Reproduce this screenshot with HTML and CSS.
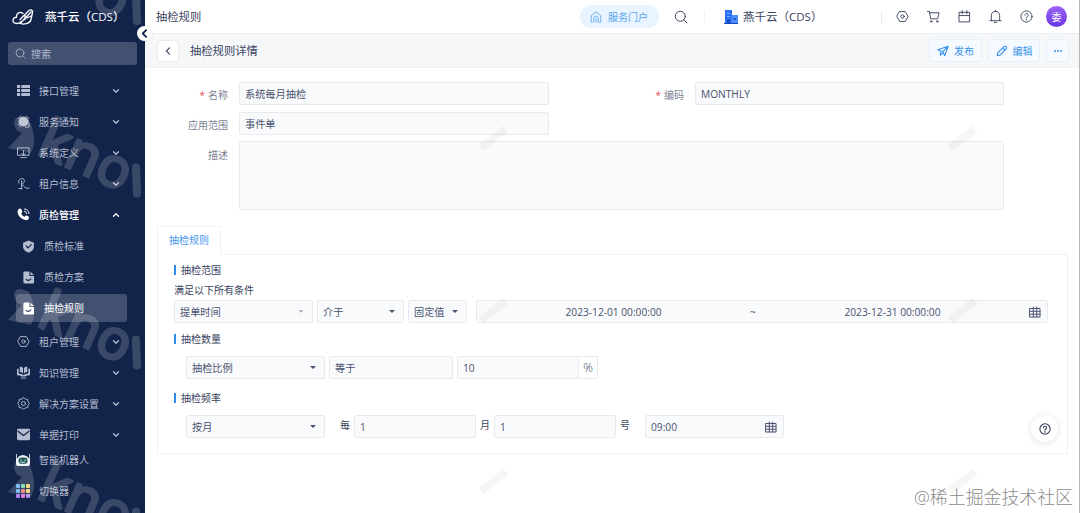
FILE: index.html
```html
<!DOCTYPE html>
<html lang="zh-CN">
<head>
    <meta charset="UTF-8">
    <meta name="viewport" content="width=device-width, initial-scale=1.0">
    <title>抽检规则</title>
    <link rel="stylesheet" href="styles.css">
</head>
<body>

    <!-- shared icons -->
    <svg class="defs" width="0" height="0">
        <symbol id="down" viewBox="0 0 8 8"><path d="M1.5 2.8 4 5.3l2.500-2.500"/></symbol>
        <symbol id="hex" viewBox="0 0 14 14"><path d="M4 1.700h6L13 7l-3 5.300H4L1 7z"/><circle cx="7" cy="7" r="1.800"/></symbol>
        <symbol id="search" viewBox="0 0 14 14"><circle cx="6.300" cy="6.300" r="5"/><path d="m10 10 3 3"/></symbol>
        <symbol id="help" viewBox="0 0 14 14"><circle cx="7" cy="7" r="6"/><path d="M5.200 5.600c0-2.600 3.700-2.300 3.700 0C8.900 7 7 6.900 7 8.300M7 9.700v1"/></symbol>
        <symbol id="doc" viewBox="0 0 14 14"><path class="solid" d="M3 .5h5v5h5V12q0 1.500-1.500 1.500H3q-1.500 0-1.500-1.500V2q0-1.500 1.500-1.500zM9.200.7l3.600 3.600H9.200z"/><path class="cut" d="M4.500 9q2.500 2.500 5-.5"/></symbol>
        <symbol id="grid-cal" viewBox="0 0 12 12"><path d="M1 2.500h10v8.500H1zM1 5.300h10M1 8.200h10M4.300 1v10M7.700 1v10"/></symbol>
    </svg>

    <div class="app">
        <aside class="sidebar">
            <svg class="sidebar-mark" width="145" height="513">
                <path class="mark-line" d="M136-5l1 26"/>
                <text transform="translate(90 6) rotate(24)">o</text>
                <g transform="translate(0 103)">
                    <path class="mark-fill" d="M14 20q0-7 8-6l7 3q6 12 5 25l-3 8-23-5 14-15q-7-2-8-10z"/>
                    <path class="mark-line" d="M136 64.500l1 26"/>
                    <text transform="translate(35 50) rotate(24)">kno</text>
                </g>
                <g transform="translate(0 275)">
                    <path class="mark-fill" d="M14 20q0-7 8-6l7 3q6 12 5 25l-3 8-23-5 14-15q-7-2-8-10z"/>
                    <path class="mark-line" d="M136 64.500l1 26"/>
                    <text transform="translate(35 50) rotate(24)">kno</text>
                </g>
                <g transform="translate(0 447)">
                    <path class="mark-fill" d="M14 20q0-7 8-6l7 3q6 12 5 25l-3 8-23-5 14-15q-7-2-8-10z"/>
                    <path class="mark-line" d="M136 64.500l1 26"/>
                    <text transform="translate(35 50) rotate(24)">kno</text>
                </g>
            </svg>

            <div class="brand">
                <svg class="logo" viewBox="0 0 22 16"><path d="M9 12.500c-1.500 2.500-7.500 3-8-.5C.7 9.500 2.800 8 4.500 8.300 4 4 8 2 11 4.500M8 10.500 16.500 2c2-2 4.500-1 4 1.500l-1.500 7c-1 4.500-8 5.500-11.500 3.500M8 14.500 19 3M13 6v4.500M20 6.500l-5 2.500"/></svg>
                <span>燕千云（CDS）</span>
            </div>
            <div class="menu-search">
                <svg class="icon" viewBox="0 0 14 14"><use href="#search"/></svg>
                <span>搜索</span>
            </div>

            <nav class="menu">
                <a class="menu-item">
                    <svg class="icon" viewBox="0 0 14 14"><path class="solid" d="M0 1h14v3.300H0zM0 5.400h14v3.200H0zM0 9.800h14V13H0z"/><path class="cut" d="M4 1v12"/></svg>
                    <span>接口管理</span>
                    <svg class="arrow"><use href="#down"/></svg>
                </a>
                <a class="menu-item">
                    <svg class="icon" viewBox="0 0 14 14"><circle class="solid" cx="7" cy="7" r="5.500"/><path d="M1 4l3-3M10 1l3 3M1 10l3 3M13 9v4H9"/></svg>
                    <span>服务通知</span>
                    <svg class="arrow"><use href="#down"/></svg>
                </a>
                <a class="menu-item">
                    <svg class="icon" viewBox="0 0 14 14"><path d="M1 2h12v8H1zM4 12.500h6M7 5v5M5 8l2 2 2-2"/></svg>
                    <span>系统定义</span>
                    <svg class="arrow"><use href="#down"/></svg>
                </a>
                <a class="menu-item">
                    <svg class="icon" viewBox="0 0 14 14"><path d="M2 6.500C-.2 2 7.500-.5 8 4c.1 1.500-.7 2.500-2 3M5 4v9M5 8c3 1 3 4 5 4h3M2 12.500h3"/></svg>
                    <span>租户信息</span>
                    <svg class="arrow"><use href="#down"/></svg>
                </a>
                <a class="menu-item open">
                    <svg class="icon" viewBox="0 0 14 14"><path class="solid" d="M1.500 1.500Q3.500-.5 5 2l.8 2Q5.500 5 4.500 5.800q1 2.500 3.600 3.600l1.400-1.300q3.500.5 3.500 2.400-.5 3.300-4 2.500Q1.500 11 .7 4.500.5 2.500 1.500 1.500z"/><path d="M8 1q4.500.5 5 5M8 3.500q2.300.3 2.500 2.500"/></svg>
                    <span>质检管理</span>
                    <svg class="arrow up"><use href="#down"/></svg>
                </a>
                <div class="submenu">
                    <a class="sub-item">
                        <svg class="icon" viewBox="0 0 14 14"><path class="solid" d="M7 .5 12.800 3v5q-1 4-5.800 5.700Q2.200 12 1.200 8V3z"/><path class="cut" d="m4.500 6.500 2 2 3.500-3.500"/></svg>
                        <span>质检标准</span>
                    </a>
                    <a class="sub-item">
                        <svg class="icon" viewBox="0 0 14 14"><use href="#doc"/></svg>
                        <span>质检方案</span>
                    </a>
                    <a class="sub-item active">
                        <svg class="icon" viewBox="0 0 14 14"><use href="#doc"/></svg>
                        <span>抽检规则</span>
                    </a>
                </div>
                <a class="menu-item">
                    <svg class="icon" viewBox="0 0 14 14"><use href="#hex"/></svg>
                    <span>租户管理</span>
                    <svg class="arrow"><use href="#down"/></svg>
                </a>
                <a class="menu-item">
                    <svg class="icon" viewBox="0 0 14 14"><path class="solid" d="M3 .5q3 0 3.500 2V8Q5 6.500 3 6.500zM11 .5q-3 0-3.500 2V8Q9 6.500 11 6.500zM0 3h1.800v5Q5 8 7 9.700 9 8 12.200 8V3H14v7q-3.500 0-5 1.300H5Q3.500 10 0 10z"/><path d="M4.500 13h5"/></svg>
                    <span>知识管理</span>
                    <svg class="arrow"><use href="#down"/></svg>
                </a>
                <a class="menu-item">
                    <svg class="icon" viewBox="0 0 14 14"><path d="M7 .8 9 2.300l2.500.2.300 2.500L13.300 7l-1.500 2-.3 2.500-2.500.200-2 1.500-2-1.500-2.500-.2L2.200 9 .7 7l1.500-2 .3-2.500L5 2.300z"/><circle cx="7" cy="7" r="2.200"/></svg>
                    <span>解决方案设置</span>
                    <svg class="arrow"><use href="#down"/></svg>
                </a>
                <a class="menu-item">
                    <svg class="icon" viewBox="0 0 14 14"><rect class="solid" x="0" y=".8" width="14" height="12.400" rx="1.500"/><path class="cut" d="m1 3.500 6 4.500 6-4.500"/></svg>
                    <span>单据打印</span>
                    <svg class="arrow"><use href="#down"/></svg>
                </a>
            </nav>

            <div class="tools">
                <a class="tool">
                    <svg class="tool-icon" viewBox="0 0 14 14"><path fill="#eef5f7" d="M0 1h.8v5l2-2.500q4-3 8.400 0l2 2.500V1h.8v10q0 2-2 2H2q-2 0-2-2z"/><rect x="2.500" y="4.500" width="9" height="6.500" rx="3" fill="#27545b"/><path d="M5 6.800v1M9 6.800v1M5.500 9.300q1.500 1 3 0" fill="none" stroke="#9be5c8"/></svg>
                    <span>智能机器人</span>
                </a>
                <a class="tool">
                    <svg class="tool-icon" viewBox="0 0 14 14">
                        <g fill="#64b5f6"><rect width="4" height="4" rx="1"/><rect y="5" width="4" height="4" rx="1"/></g>
                        <g fill="#74d99b"><rect x="5" width="4" height="4" rx="1"/></g>
                        <g fill="#f3d36b"><rect x="10" width="4" height="4" rx="1"/><rect x="10" y="5" width="4" height="4" rx="1"/></g>
                        <g fill="#f2777a"><rect x="5" y="5" width="4" height="4" rx="1"/></g>
                        <g fill="#b184ef"><rect y="10" width="4" height="4" rx="1"/><rect x="10" y="10" width="4" height="4" rx="1"/></g>
                        <g fill="#e17be0"><rect x="5" y="10" width="4" height="4" rx="1"/></g>
                    </svg>
                    <span>切换器</span>
                </a>
            </div>
            <button class="collapse"><svg viewBox="0 0 8 8"><use href="#down"/></svg></button>
        </aside>

        <main class="main">
            <header class="topbar">
                <span class="page-name">抽检规则</span>
                <a class="portal">
                    <svg class="icon" viewBox="0 0 14 14"><path d="M2.500 13h-1V5.500L7 1l5.500 4.500V13h-1.700M4.500 13V8q0-2 2.500-2t2.500 2v5M7 9v4"/></svg>
                    <span>服务门户</span>
                </a>
                <svg class="icon top-search" viewBox="0 0 14 14"><use href="#search"/></svg>
                <div class="tenant">
                    <svg class="building" viewBox="0 0 14 14"><path fill="#2b6ff2" d="M1 0h7v13H1z"/><path fill="#4a8dfb" d="M7.500 5H14v8H7.500z"/><path fill="#1749b8" d="M0 13h14v1H0zM3 9.500h3V13H3zM9.800 8h1.700v2H9.800z"/><path stroke="#7fb0ff" d="M3.500 3.500h2M3.500 6.500h2"/></svg>
                    <span>燕千云（CDS）</span>
                </div>
                <div class="actions">
                    <svg class="icon" viewBox="0 0 14 14"><use href="#hex"/></svg>
                    <svg class="icon" viewBox="0 0 14 14"><path d="M.5 1.500h2l1.500 8h7.500l1.500-6.500H3"/><circle cx="4.500" cy="12.300" r=".8"/><circle cx="11" cy="12.300" r=".8"/></svg>
                    <svg class="icon" viewBox="0 0 14 14"><path d="M1.500 2.500h11v10.300h-11zM1.500 6h11M4.500.7v3.500M9.500.7v3.500"/></svg>
                    <svg class="icon" viewBox="0 0 14 14"><path d="M1 11.500h12M2.500 11.500V6q.5-4.500 4.500-4.500T11.500 6v5.500M5.700 13.300h2.600M7 .4v1"/></svg>
                    <svg class="icon" viewBox="0 0 14 14"><use href="#help"/></svg>
                    <span class="avatar">委</span>
                </div>
            </header>

            <div class="subbar">
                <button class="back"><svg viewBox="0 0 8 8"><use href="#down"/></svg></button>
                <h1>抽检规则详情</h1>
                <div class="buttons">
                    <button class="btn btn-publish">
                        <svg class="icon" viewBox="0 0 14 14"><path d="M1 5.500 13 1.500 9 12.500 6.500 8zM6.500 8 13 1.500M4 8.500V12l2.500-2.500"/></svg>发布
                    </button>
                    <button class="btn btn-edit">
                        <svg class="icon" viewBox="0 0 14 14"><path d="m1.500 12.500.7-3.500 7-7q1.200-1 2.500 0 1.300 1.300.2 2.600l-7 7zM8 3.500 10.500 6"/></svg>编辑
                    </button>
                    <button class="btn btn-more"><i></i><i></i><i></i></button>
                </div>
            </div>

            <div class="form">
                <label class="required">名称</label>
                <div class="field">系统每月抽检</div>
                <label class="required">编码</label>
                <div class="field">MONTHLY</div>
                <label>应用范围</label>
                <div class="field">事件单</div>
                <label class="desc-label">描述</label>
                <div class="field textarea"></div>
            </div>

            <div class="tabs"><span class="tab">抽检规则</span></div>
            <section class="panel">
                <h2>抽检范围</h2>
                <p class="tip">满足以下所有条件</p>
                <div class="row row-range">
                    <div class="field select w-139 muted">提单时间</div>
                    <div class="field select w-87">介于</div>
                    <div class="field select w-59">固定值</div>
                    <div class="field range">
                        <span>2023-12-01 00:00:00</span>
                        <b>~</b>
                        <span>2023-12-31 00:00:00</span>
                        <svg class="cal"><use href="#grid-cal"/></svg>
                    </div>
                </div>

                <h2>抽检数量</h2>
                <div class="row indent row-count">
                    <div class="field select w-139">抽检比例</div>
                    <div class="field w-124">等于</div>
                    <div class="number">
                        <div class="field w-122">10</div>
                        <div class="unit">%</div>
                    </div>
                </div>

                <h2>抽检频率</h2>
                <div class="row indent row-frequency">
                    <div class="field select w-139">按月</div>
                    <span class="word first">每</span>
                    <div class="field w-122">1</div>
                    <span class="word">月</span>
                    <div class="field w-122">1</div>
                    <span class="word last">号</span>
                    <div class="field w-139 time">09:00<svg class="cal"><use href="#grid-cal"/></svg></div>
                </div>
            </section>

            <svg class="main-mark" width="934" height="479">
                <path d="M336 114l25-19M336 286l25-19M336 457l25-19M805 114l25-19M805 286l25-19M805 457l25-19"/>
            </svg>
            <button class="float-help"><svg class="icon" viewBox="0 0 14 14"><use href="#help"/></svg></button>
            <span class="credit">@稀土掘金技术社区</span>
        </main>
    </div>

</body>
</html>
```

FILE: styles.css
```css
* {
    box-sizing: border-box;
}

body {
    margin: 0;
    background: #fff;
    color: #3a4360;
    font: 10px/14px "Open Sans", "Noto Sans CJK SC", sans-serif;
}

button {
    padding: 0;
    font: inherit;
}

svg {
    flex: none;
    fill: none;
    stroke: currentColor;
    stroke-linecap: round;
    stroke-linejoin: round;
}

.defs {
    position: absolute;
}

.solid {
    fill: currentColor;
    stroke: none;
}

.cut {
    stroke: #13244b;
    stroke-width: 1.3;
}

.icon {
    width: 13px;
    height: 13px;
}

.app {
    display: flex;
    width: 1080px;
    height: 513px;
    overflow: hidden;
}

/* sidebar */
.sidebar {
    position: relative;
    z-index: 1;
    display: flex;
    flex-direction: column;
    flex: none;
    width: 145px;
    background: #13244b;
    color: #b4bdcf;
}

.sidebar-mark {
    position: absolute;
    top: 0;
    left: 0;
    z-index: 1;
    opacity: 0.17;
    pointer-events: none;
}

.sidebar-mark text {
    fill: #fff;
    stroke: #fff;
    stroke-width: 3;
    font: 400 55px "Open Sans", sans-serif;
}

.mark-fill {
    fill: #fff;
    stroke: none;
}

.mark-line {
    stroke: #fff;
    stroke-width: 8;
}

.brand {
    display: flex;
    align-items: center;
    gap: 11px;
    height: 34px;
    padding-left: 12px;
    color: #fff;
    font-size: 11.5px;
    font-weight: 500;
    white-space: nowrap;
}

.logo {
    width: 22px;
    height: 16px;
    stroke-width: 1.3;
}

.menu-search {
    display: flex;
    align-items: center;
    gap: 5px;
    height: 23px;
    margin: 8px 8px 0;
    padding-left: 7px;
    border-radius: 3px;
    background: #435170;
}

.menu-search .icon {
    width: 11px;
    height: 11px;
}

.menu {
    padding-top: 10px;
}

.menu-item {
    display: flex;
    align-items: center;
    height: 31px;
    padding: 0 25px 0 17px;
}

.menu-item span {
    flex: 1;
    margin-left: 9px;
}

.menu-item.open {
    color: #fff;
    font-weight: 500;
}

.arrow {
    width: 8px;
    height: 8px;
    stroke-width: 1.3;
}

.arrow.up {
    transform: rotate(180deg);
}

.submenu {
    padding: 2px 18px 1px 16px;
}

.sub-item {
    display: flex;
    align-items: center;
    gap: 9px;
    height: 28px;
    margin: 0 0 3px;
    padding-left: 6px;
    border-radius: 3px;
}

.sub-item.active {
    background: #425170;
    color: #fff;
}

.tool {
    display: flex;
    align-items: center;
    gap: 9px;
    height: 20px;
    padding-left: 16px;
}

.tool + .tool {
    margin-top: 11px;
}

.tool-icon {
    width: 14px;
    height: 14px;
    stroke: none;
}

.collapse {
    position: absolute;
    top: 26px;
    right: -7px;
    z-index: 2;
    display: grid;
    place-items: center;
    width: 15px;
    height: 15px;
    border: 0;
    border-radius: 50%;
    background: #fff;
    box-shadow: 0 0 2px rgba(0, 0, 0, 0.15);
    color: #13244b;
}

.collapse svg {
    width: 11px;
    height: 11px;
    stroke-width: 1.3;
    transform: rotate(90deg);
}

/* top bars */
.main {
    position: relative;
    flex: 1;
    border-right: 1px solid #b5b7ba;
}

.topbar {
    display: flex;
    align-items: center;
    height: 34px;
    padding-left: 11px;
    border-bottom: 1px solid #eceef1;
}

.page-name {
    width: 424px;
    font-size: 11.3px;
}

.portal {
    display: flex;
    align-items: center;
    gap: 6px;
    width: 79px;
    height: 23px;
    padding-left: 10px;
    border-radius: 12px;
    background: #e8f4ff;
    color: #5aa5ee;
}

.portal .icon {
    width: 12px;
    height: 12px;
}

.top-search {
    margin-left: 15px;
    width: 14px;
    height: 14px;
}

.tenant {
    display: flex;
    align-items: center;
    gap: 5px;
    width: 178px;
    height: 12px;
    margin-left: 16px;
    padding-left: 19px;
    border-left: 1px solid #f0f1f4;
    border-right: 1px solid #e5e7eb;
    font-size: 11.5px;
}

.building {
    width: 14px;
    height: 14px;
    stroke: none;
}

.actions {
    display: flex;
    align-items: center;
    gap: 18px;
    margin-left: 14px;
}

.avatar {
    display: grid;
    place-items: center;
    width: 21px;
    height: 21px;
    margin-left: -5px;
    border-radius: 50%;
    background: linear-gradient(#9a63f3, #6a38ea);
    color: #fff;
}

.subbar {
    display: flex;
    align-items: center;
    height: 34px;
    padding: 0 10px 0 12px;
    border-bottom: 1px solid #f0f1f3;
    background: #f6f7f9;
}

.back {
    display: grid;
    place-items: center;
    width: 22px;
    height: 22px;
    border: 1px solid #e9ebef;
    border-radius: 3px;
    background: #fff;
    color: #4a526b;
}

.back svg {
    width: 10px;
    height: 10px;
    transform: rotate(90deg);
}

h1 {
    flex: 1;
    margin: 0 0 0 11px;
    font-size: 11.3px;
    font-weight: 400;
}

.buttons {
    display: flex;
    gap: 6px;
}

.btn {
    display: flex;
    align-items: center;
    justify-content: center;
    gap: 5px;
    height: 23px;
    border: 1px solid #e4eff8;
    border-radius: 3px;
    background: #f4faff;
    color: #3790e6;
}

.btn .icon {
    width: 12px;
    height: 12px;
    stroke-width: 1.3;
}

.btn-publish {
    width: 53px;
}

.btn-edit {
    width: 52px;
}

.btn-more {
    gap: 1px;
    width: 23px;
}

.btn-more i {
    width: 2px;
    height: 2px;
    border-radius: 50%;
    background: #3790e6;
}

/* form */
.form {
    display: grid;
    grid-template-columns: 94px 310px 146px 309px;
    grid-template-rows: 23px 23px 69px;
    row-gap: 7px;
    padding: 14px 0 0;
}

label {
    padding: 6px 11px 0 0;
    color: #7c8292;
    text-align: right;
    white-space: nowrap;
}

.required::before {
    content: "*";
    margin-right: 3px;
    color: #e34d59;
}

.desc-label {
    grid-column: 1;
}

.field {
    display: flex;
    align-items: center;
    height: 23px;
    padding: 0 5px;
    border: 1px solid #e8eaed;
    border-radius: 2px;
    background: #f9fafb;
    color: #4a5270;
    font-size: 10.2px;
}

.textarea {
    grid-column: 2 / 5;
    height: 69px;
    margin-top: -1px;
    background: #fafafa;
}

/* tab panel */
.tabs {
    height: 28px;
    margin: 15px 11px 0 12px;
}

.tab {
    position: relative;
    z-index: 1;
    display: block;
    width: 64px;
    height: 29px;
    border: 1px solid #f0f1f3;
    border-bottom: 0;
    background: #fff;
    color: #4596eb;
    line-height: 27px;
    text-align: center;
}

.panel {
    height: 200px;
    margin: 0 11px 0 12px;
    padding: 9px 19px 0 16px;
    border: 1px solid #f0f1f3;
}

h2 {
    height: 12px;
    margin: 0;
    font-size: 10px;
    font-weight: 400;
    line-height: 12px;
}

h2::before {
    content: "";
    display: inline-block;
    width: 2px;
    height: 10px;
    margin-right: 5px;
    background: #2b8cee;
    vertical-align: -1px;
}

.tip {
    margin: 7px 0 3px;
}

.row {
    display: flex;
    gap: 4px;
}

.row-range {
    margin-bottom: 10px;
}

.row-count {
    margin-bottom: 13px;
}

.row-count,
.row-frequency {
    margin-top: 11px;
}

.indent {
    padding-left: 12px;
}

.w-139 {
    width: 139px;
}

.w-124 {
    width: 124px;
}

.w-122 {
    width: 122px;
}

.w-87 {
    width: 87px;
}

.w-59 {
    width: 59px;
}

.select {
    justify-content: space-between;
    padding-right: 8px;
}

.select::after {
    content: "";
    border: 3px solid transparent;
    border-top: 3px solid #4a5270;
    border-bottom: 0;
}

.muted::after {
    opacity: 0.5;
    transform: scale(0.8);
}

.range {
    flex: 1;
    margin-left: 5px;
    padding: 0 6px 0 0;
}

.range span {
    flex: 1;
    text-align: center;
}

.range b {
    font-weight: 400;
}

.cal {
    width: 12px;
    height: 12px;
}

.number {
    display: flex;
}

.unit {
    width: 19px;
    border: 1px solid #e8eaed;
    border-left: 0;
    border-radius: 0 2px 2px 0;
    font-size: 12px;
    font-weight: 300;
    line-height: 21px;
    text-align: center;
}

.word {
    width: 10px;
    line-height: 21px;
}

.word.first {
    margin-left: 11px;
}

.word.last {
    margin-right: 11px;
}

.time {
    justify-content: space-between;
    padding-right: 6px;
}

/* overlays */
.main-mark {
    position: absolute;
    top: 34px;
    left: 0;
    stroke: rgba(0, 0, 0, 0.035);
    stroke-width: 8;
    stroke-linecap: butt;
    pointer-events: none;
}

.float-help {
    position: absolute;
    top: 415px;
    right: 21px;
    display: grid;
    place-items: center;
    width: 27px;
    height: 27px;
    border: 0;
    border-radius: 50%;
    background: #fff;
    box-shadow: 0 1px 7px rgba(0, 0, 0, 0.12);
    color: #2b3454;
}

.float-help .icon {
    width: 12px;
    height: 12px;
    stroke-width: 1.2;
}

.credit {
    position: absolute;
    right: 6px;
    bottom: 5px;
    color: #8c8c8c;
    font-size: 17.9px;
    font-weight: 300;
    line-height: 22px;
}
```
